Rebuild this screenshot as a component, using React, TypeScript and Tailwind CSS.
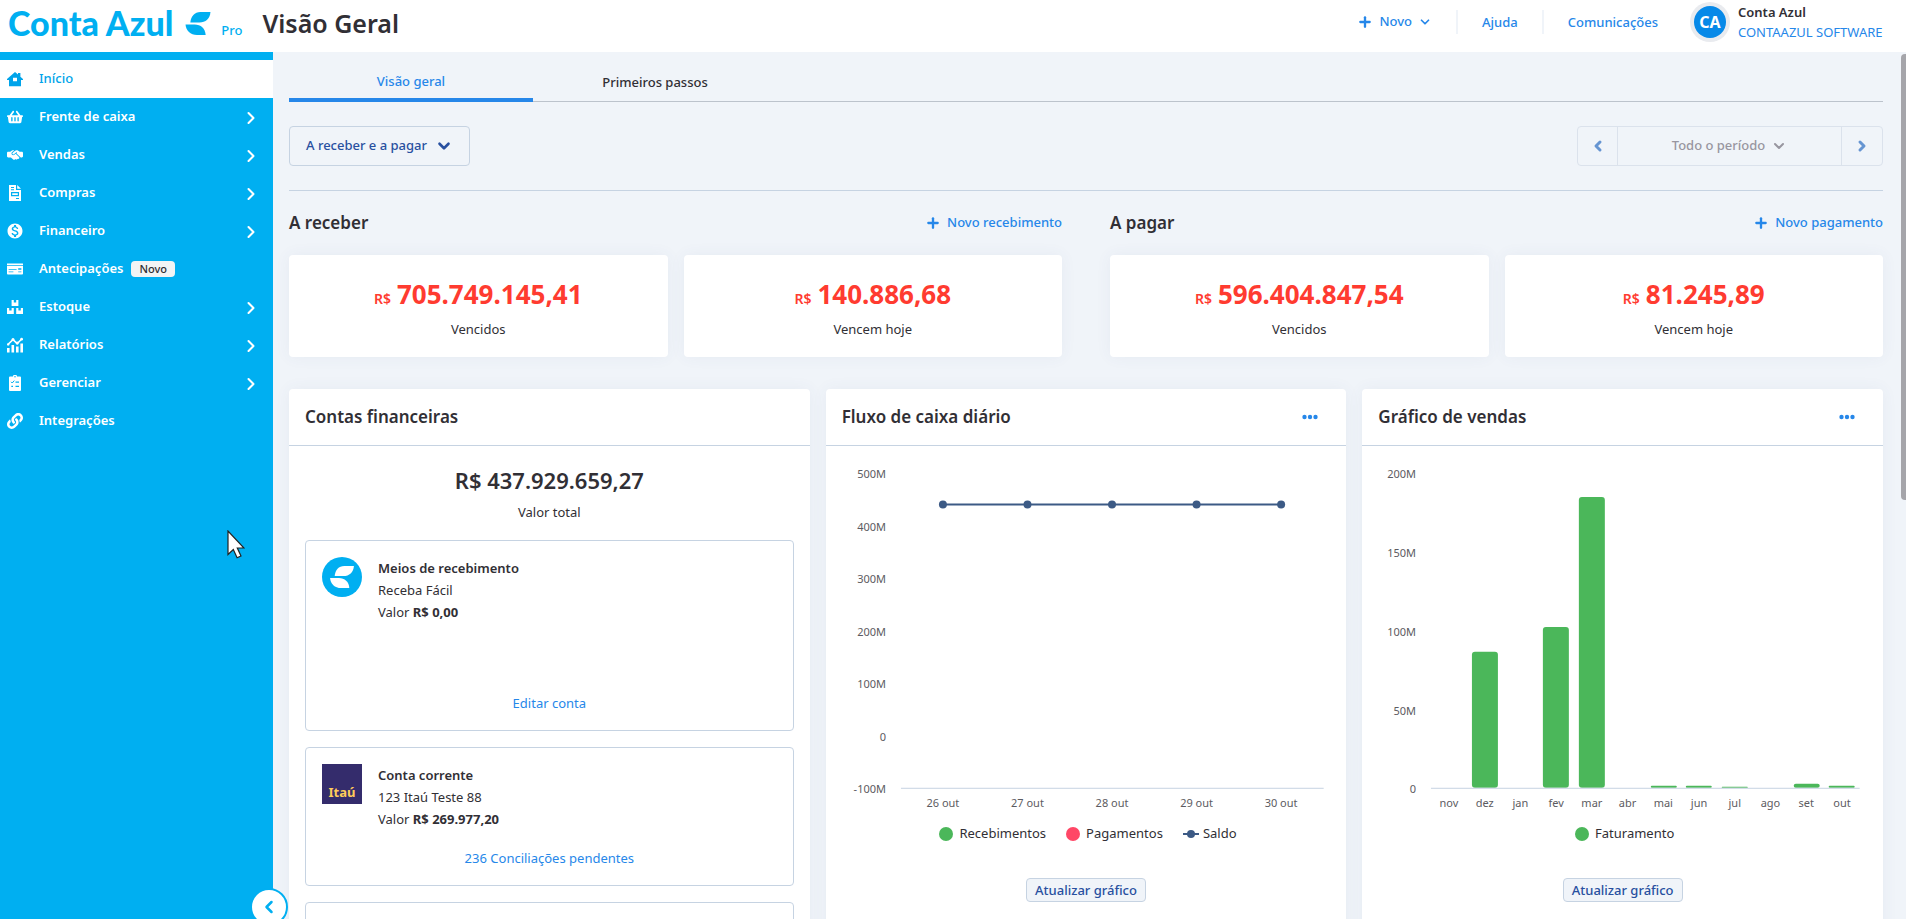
import type { ReactNode } from "react";
import { FaLink, FaMoneyCheck, FaShoppingBasket } from "react-icons/fa";
import { FaHandshakeSimple } from "react-icons/fa6";
import { MdMonetizationOn } from "react-icons/md";
import { ChevronDown, ChevronLeft, ChevronRight, Plus } from "lucide-react";

const HomeIcon = () => (
  <svg viewBox="0 0 16 16" className="size-4" fill="currentColor" aria-hidden="true">
    <path
      fillRule="evenodd"
      d="M8 1 11 3.6V2h2.4v3.7L16 8v1h-2v6.2H2V9H0V8zM6 6.8v3.4h4V6.8z"
    />
  </svg>
);

const InvoiceIcon = () => (
  <svg viewBox="0 0 16 16" className="size-4" fill="currentColor" aria-hidden="true">
    <path
      fillRule="evenodd"
      d="M2 0h7v5h5v11H2zM4 2v1h3V2zM4 4.2v1h3v-1zM4 7v4.200h8V7zM5.200 8.200h5.600V10H5.200zM9 13v1h3v-1z"
    />
    <path d="M10.200 0 14 3.800h-3.800z" />
  </svg>
);

const BoxesIcon = () => (
  <svg viewBox="0 0 16 16" className="size-4" fill="currentColor" aria-hidden="true">
    <path d="M4.6 1h2.2v2.6h2.4V1h2.2v6H4.6zM0 9h2.2v2.6h2.4V9h2.2v6H0zM9.2 9h2.2v2.6h2.4V9H16v6H9.2z" />
  </svg>
);

const ReportIcon = () => (
  <svg viewBox="0 0 16 16" className="size-4" fill="currentColor" aria-hidden="true">
    <path d="M0 11h2.6v4.5H0zM4.5 8h2.6v7.5H4.5zM9 9.5h2.6v6H9zM13.4 6.5H16v9h-2.6z" />
    <path d="M.6 7.8 6 2.6l4.2 4L15 1.8" fill="none" stroke="currentColor" strokeWidth="1.5" />
    <circle cx="6" cy="2.6" r="1.5" />
    <circle cx="10.2" cy="6" r="1.5" />
    <circle cx="14.6" cy="2.2" r="1.4" />
    <circle cx="1.2" cy="7.4" r="1.2" />
  </svg>
);

const ClipboardIcon = () => (
  <svg viewBox="0 0 16 16" className="size-4" fill="currentColor" aria-hidden="true">
    <path
      fillRule="evenodd"
      d="M6 1.6a2 2 0 0 1 4 0h3q1 0 1 1V15q0 1-1 1H3q-1 0-1-1V2.6q0-1 1-1zM8 .9a.7.7 0 1 0 0 1.5.7.7 0 1 0 0-1.5zM8.5 6.5v1.2H12V6.5zM8.5 10.8V12H12v-1.2zM4.3 10.8V12H6v-1.2z"
    />
    <path d="m4 6.8 1.2 1.2L7.3 5.6" fill="none" stroke="#00aff1" strokeWidth="1" />
  </svg>
);

const menu: { label: string; icon: ReactNode; sub?: boolean; badge?: string }[] = [
  { label: "Início", icon: <HomeIcon /> },
  { label: "Frente de caixa", icon: <FaShoppingBasket className="size-4" />, sub: true },
  { label: "Vendas", icon: <FaHandshakeSimple className="size-4" />, sub: true },
  { label: "Compras", icon: <InvoiceIcon />, sub: true },
  { label: "Financeiro", icon: <MdMonetizationOn className="-m-px size-[18px]" />, sub: true },
  { label: "Antecipações", icon: <FaMoneyCheck className="size-4" />, badge: "Novo" },
  { label: "Estoque", icon: <BoxesIcon />, sub: true },
  { label: "Relatórios", icon: <ReportIcon />, sub: true },
  { label: "Gerenciar", icon: <ClipboardIcon />, sub: true },
  { label: "Integrações", icon: <FaLink className="size-4" /> },
];

const LeafMark = ({ className }: { className: string }) => (
  <svg viewBox="0 0 26 24" className={className} fill="currentColor" aria-hidden="true">
    <path d="M26 0H15.5C9.5 0 5.5 4.5 5 11h9.500C21 11 25.5 7 26 0z" />
    <path d="M0 13h9.500C16 13 20.5 17 21 24H12C5 24 .5 19.5 0 13z" />
  </svg>
);

function Header() {
  return (
    <header className="flex h-[52px] shrink-0 items-start bg-white pr-4 pl-2">
      <a href="#" className="flex text-[#00aff1]">
        <span className="font-[Lato,sans-serif] text-[34px] leading-[46px] font-black">Conta Azul</span>
        <LeafMark className="mt-3 ml-3 h-[23px] w-[26px]" />
        <span className="mt-5 ml-2.5 text-[13px] leading-5 font-medium">Pro</span>
      </a>
      <h1 className="ml-5 text-[25px] leading-[46px] font-semibold">Visão Geral</h1>
      <nav className="ml-auto flex h-11 items-center text-[13px] font-medium text-[#2687e9]">
        <button type="button" className="flex items-center pr-6">
          <Plus className="mr-1.5 size-4" strokeWidth={3.5} />
          Novo
          <ChevronDown className="ml-1.5 size-3.5" strokeWidth={3} />
        </button>
        <a href="#" className="border-l-2 border-[#f0f4f9] px-6 leading-6">Ajuda</a>
        <a href="#" className="border-l-2 border-[#f0f4f9] pr-8 pl-6 leading-6">Comunicações</a>
      </nav>
      <a href="#" className="mt-0.5 flex gap-2 text-[13px] leading-5">
        <span className="flex size-10 items-center justify-center rounded-full bg-[#e9ebef]">
          <span className="flex size-8 items-center justify-center rounded-full bg-[#0789e8] text-base font-bold text-white">
            CA
          </span>
        </span>
        <span className="flex min-w-38 flex-col">
          <strong className="font-semibold">Conta Azul</strong>
          <span className="text-[#2687e9]">CONTAAZUL SOFTWARE</span>
        </span>
      </a>
    </header>
  );
}

function Sidebar() {
  return (
    <aside className="relative z-10 w-[273px] shrink-0 bg-[#00aff1] pt-2">
      <nav>
        {menu.map((item, i) => (
          <a
            key={item.label}
            href="#"
            className={`flex h-[38px] items-center pr-3 pl-[7px] text-[13px] ${
              i === 0 ? "bg-white font-medium text-[#00a4ea]" : "font-semibold text-white"
            }`}
          >
            {item.icon}
            <span className="ml-4">{item.label}</span>
            {item.badge ? (
              <span className="ml-2 rounded bg-[#f2f4f5] px-2 text-[11px] leading-4 font-medium text-[#312f35]">
                {item.badge}
              </span>
            ) : null}
            {item.sub ? <ChevronRight className="mt-0.5 ml-auto size-5" strokeWidth={2.5} /> : null}
          </a>
        ))}
      </nav>
      <svg viewBox="0 0 18 29" className="absolute top-[478px] left-[227px] h-[29px] w-[18px]" aria-hidden="true">
        <path
          d="M1 1v23.5l5.3-5 3.8 8.3 3.9-1.8-3.7-8H17z"
          fill="#fff"
          stroke="#222"
          strokeWidth="1.2"
        />
      </svg>
      <button
        type="button"
        aria-label="Recolher menu"
        className="absolute -right-[15px] -bottom-[7px] flex size-[38px] items-center justify-center rounded-full border-2 border-[#00aff1] bg-white text-[#00aff1]"
      >
        <ChevronLeft className="size-5" strokeWidth={3} />
      </button>
    </aside>
  );
}

function Summary({
  title,
  action,
  cards,
}: {
  title: string;
  action: string;
  cards: { value: string; label: string }[];
}) {
  return (
    <section>
      <div className="flex h-16 items-center justify-between">
        <h2 className="text-[17px] font-semibold">{title}</h2>
        <button type="button" className="flex items-center gap-1.5 text-[13px] font-medium text-[#2687e9]">
          <Plus className="size-4" strokeWidth={3.5} />
          {action}
        </button>
      </div>
      <div className="grid grid-cols-2 gap-4">
        {cards.map((card) => (
          <div
            key={card.label}
            className="flex h-[102px] flex-col items-center rounded bg-white pt-5 shadow-[0_0_16px_rgba(60,80,140,0.06)]"
          >
            <p className="text-[26px] leading-[38px] font-bold text-[#ff3b30]">
              <span className="mr-1.5 text-sm font-semibold">R$</span>
              {card.value}
            </p>
            <p className="mt-1 text-[13px] leading-6">{card.label}</p>
          </div>
        ))}
      </div>
    </section>
  );
}

function Widget({ title, menu, children }: { title: string; menu?: boolean; children: ReactNode }) {
  return (
    <section className="flex min-h-[600px] flex-col rounded bg-white shadow-[0_0_16px_rgba(60,80,140,0.06)]">
      <div className="flex h-[57px] shrink-0 items-center justify-between border-b border-[#c6d3e2] pr-7 pl-4">
        <h2 className="text-[17px] leading-6 font-semibold">{title}</h2>
        {menu ? (
          <button type="button" aria-label="Mais opções" className="text-[#2687e9]">
            <svg viewBox="0 0 16 6" className="h-1.5 w-4" fill="currentColor">
              <circle cx="2.5" cy="3" r="2.2" />
              <circle cx="8" cy="3" r="2.2" />
              <circle cx="13.5" cy="3" r="2.2" />
            </svg>
          </button>
        ) : null}
      </div>
      {children}
    </section>
  );
}

function Account({
  logo,
  name,
  bank,
  value,
  link,
  className,
}: {
  logo: ReactNode;
  name: string;
  bank: string;
  value: string;
  link: string;
  className: string;
}) {
  return (
    <li className={`flex flex-col justify-between rounded border border-[#c6d3e2] p-4 ${className}`}>
      <div className="flex gap-4">
        {logo}
        <div className="text-[13px] leading-[22px]">
          <p className="font-semibold">{name}</p>
          <p>{bank}</p>
          <p>
            Valor <strong className="font-bold">{value}</strong>
          </p>
        </div>
      </div>
      <a href="#" className="self-center text-[13px] leading-[22px] text-[#2687e9]">
        {link}
      </a>
    </li>
  );
}

const LegendDot = ({ label, className }: { label: string; className: string }) => (
  <span className="flex items-center gap-1.5">
    <span className={`size-3.5 rounded-full ${className}`} />
    {label}
  </span>
);

const RefreshButton = () => (
  <button
    type="button"
    className="mt-7 h-6 self-center rounded border border-[#c6d3e2] bg-[#f0f4f9] px-2 text-[13px] leading-5 font-medium text-[#2850a0]"
  >
    Atualizar gráfico
  </button>
);

const balanceTicks = ["500M", "400M", "300M", "200M", "100M", "0", "-100M"];
const balanceDays = ["26 out", "27 out", "28 out", "29 out", "30 out"];

function BalanceChart() {
  const x = (i: number) => 117 + i * 84.6;
  return (
    <svg viewBox="0 0 521 372" className="w-full text-[11px]" fill="#5c5b61">
      {balanceTicks.map((tick, i) => (
        <text key={tick} x="60" y={32 + i * 52.6} textAnchor="end">{tick}</text>
      ))}
      <path d="M75 342.5h423" stroke="#c6d3e2" />
      <path d={`M${x(0)} 58.5H${x(4)}`} stroke="#3c5a85" strokeWidth="2" />
      {balanceDays.map((day, i) => (
        <g key={day}>
          <circle cx={x(i)} cy="58.5" r="4" fill="#3c5a85" />
          <text x={x(i)} y="361" textAnchor="middle">{day}</text>
        </g>
      ))}
    </svg>
  );
}

const salesTicks = ["200M", "150M", "100M", "50M", "0"];
const sales = [
  { month: "nov", height: 0 },
  { month: "dez", height: 136 },
  { month: "jan", height: 0 },
  { month: "fev", height: 161 },
  { month: "mar", height: 291 },
  { month: "abr", height: 0 },
  { month: "mai", height: 2 },
  { month: "jun", height: 2 },
  { month: "jul", height: 1 },
  { month: "ago", height: 0 },
  { month: "set", height: 4 },
  { month: "out", height: 2 },
];

function SalesChart() {
  return (
    <svg viewBox="0 0 521 372" className="w-full text-[11px]" fill="#5c5b61">
      {salesTicks.map((tick, i) => (
        <text key={tick} x="54" y={32 + i * 78.9} textAnchor="end">{tick}</text>
      ))}
      {sales.map(({ month, height }, i) => {
        const center = 87 + i * 35.75;
        return (
          <g key={month}>
            <rect
              x={Math.round(center - 13)}
              y={342 - height}
              width="26"
              height={height}
              rx={Math.min(3, height / 2)}
              fill="#4bb75a"
            />
            <text x={center} y="361" textAnchor="middle">{month}</text>
          </g>
        );
      })}
      <path d="M69 342.5h429" stroke="#c6d3e2" />
    </svg>
  );
}

export default function App() {
  return (
    <div className="flex h-screen flex-col overflow-hidden bg-[#f0f4f9] font-['Noto_Sans','Open_Sans',sans-serif] text-[#312f35]">
      <Header />
      <div className="flex min-h-0 flex-1">
        <Sidebar />
        <div className="relative min-w-0 flex-1">
          <main className="h-full overflow-y-auto pr-[23px] pl-4 [scrollbar-width:none]">
            <div role="tablist" className="flex h-[50px] border-b border-[#bcc3cc] text-[13px]">
              <button
                type="button"
                role="tab"
                aria-selected="true"
                className="-mb-px w-61 border-b-4 border-[#2687e9] pt-3.5 font-medium text-[#2687e9]"
              >
                Visão geral
              </button>
              <button type="button" role="tab" aria-selected="false" className="w-61 pt-3 font-medium">
                Primeiros passos
              </button>
            </div>

            <div className="flex justify-between border-b border-[#c6d3e2] py-6 text-[13px] font-medium">
              <button
                type="button"
                className="flex h-10 items-center gap-2 rounded border border-[#c6d3e2] px-4 text-[#2850a0]"
              >
                A receber e a pagar
                <ChevronDown className="size-[18px]" strokeWidth={3.5} />
              </button>
              <div className="flex h-10 divide-x divide-[#dbe2ec] rounded border border-[#dbe2ec]">
                <button type="button" aria-label="Período anterior" className="w-10 text-[#6695d2]">
                  <ChevronLeft className="mx-auto size-4" strokeWidth={4.5} />
                </button>
                <button type="button" className="flex w-56 items-center justify-center gap-1.5 text-[#9896a0]">
                  Todo o período
                  <ChevronDown className="size-4" strokeWidth={3} />
                </button>
                <button type="button" aria-label="Próximo período" className="w-10 text-[#6695d2]">
                  <ChevronRight className="mx-auto size-4" strokeWidth={4.5} />
                </button>
              </div>
            </div>

            <div className="grid grid-cols-2 gap-12">
              <Summary
                title="A receber"
                action="Novo recebimento"
                cards={[
                  { value: "705.749.145,41", label: "Vencidos" },
                  { value: "140.886,68", label: "Vencem hoje" },
                ]}
              />
              <Summary
                title="A pagar"
                action="Novo pagamento"
                cards={[
                  { value: "596.404.847,54", label: "Vencidos" },
                  { value: "81.245,89", label: "Vencem hoje" },
                ]}
              />
            </div>

            <div className="mt-8 grid grid-cols-3 gap-4">
              <Widget title="Contas financeiras">
                <p className="pt-[18px] text-center text-[22px] leading-8 font-semibold">R$ 437.929.659,27</p>
                <p className="mt-1 text-center text-[13px] leading-6">Valor total</p>
                <ul className="mt-4 flex flex-col gap-4 px-4">
                  <Account
                    className="h-[191px]"
                    logo={
                      <span className="flex size-10 shrink-0 items-center justify-center rounded-full bg-[#00aff1] text-white">
                        <LeafMark className="h-[22px] w-6" />
                      </span>
                    }
                    name="Meios de recebimento"
                    bank="Receba Fácil"
                    value="R$ 0,00"
                    link="Editar conta"
                  />
                  <Account
                    className="h-[139px]"
                    logo={
                      <span className="flex size-10 shrink-0 items-end justify-center bg-[#342c6c] pb-0.5 text-[13px] font-bold text-[#ffcb5a]">
                        Itaú
                      </span>
                    }
                    name="Conta corrente"
                    bank="123 Itaú Teste 88"
                    value="R$ 269.977,20"
                    link="236 Conciliações pendentes"
                  />
                  <li className="h-[139px] rounded border border-[#c6d3e2]" />
                </ul>
              </Widget>

              <Widget title="Fluxo de caixa diário" menu>
                <BalanceChart />
                <div className="flex h-8 items-center justify-center gap-5 pl-1 text-[13px]">
                  <LegendDot label="Recebimentos" className="bg-[#4bb75a]" />
                  <LegendDot label="Pagamentos" className="bg-[#ff4766]" />
                  <span className="flex items-center gap-1">
                    <svg viewBox="0 0 16 8" className="h-2 w-4" fill="#3c5a85">
                      <path d="M0 3h16v2H0z" />
                      <circle cx="8" cy="4" r="4" />
                    </svg>
                    Saldo
                  </span>
                </div>
                <RefreshButton />
              </Widget>

              <Widget title="Gráfico de vendas" menu>
                <SalesChart />
                <div className="flex h-8 items-center justify-center pl-1 text-[13px]">
                  <LegendDot label="Faturamento" className="bg-[#4bb75a]" />
                </div>
                <RefreshButton />
              </Widget>
            </div>
          </main>
          <div className="absolute top-0.5 right-0 h-[446px] w-[5px] rounded-l bg-[#a5a5aa]" />
        </div>
      </div>
    </div>
  );
}
